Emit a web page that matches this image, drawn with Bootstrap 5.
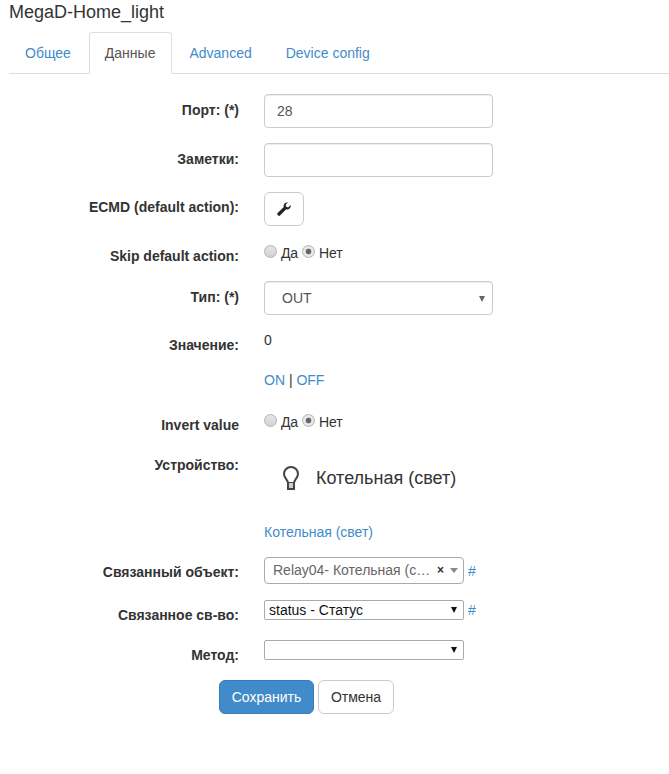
<!DOCTYPE html>
<html lang="en">

<head>
    <meta charset="UTF-8">
    <meta name="viewport" content="width=device-width, initial-scale=1">
    <title>MegaD-Home_light</title>
    <link rel="stylesheet" href="https://cdn.jsdelivr.net/npm/bootstrap@5.3.2/dist/css/bootstrap.min.css">
    <script src="https://cdn.jsdelivr.net/npm/bootstrap@5.3.2/dist/js/bootstrap.bundle.min.js"></script>
    <style>
        body {
            font-family: "Liberation Sans", Arial, sans-serif;
            font-size: 14px;
            line-height: 20px;
            color: #333;
            padding: 0 0 0 9px;
        }

        a {
            color: #428bca;
            text-decoration: none;
        }

        .page-title {
            font-size: 18px;
            line-height: 20px;
            font-weight: 400;
            margin: 2px 0 10px;
        }

        .nav-tabs {
            border-bottom-color: #ddd;
            margin-bottom: 20px;
        }

        .nav-tabs .nav-link {
            color: #428bca;
            padding: 10px 15px;
            margin-right: 2px;
            height: 42px;
            border-radius: 4px 4px 0 0;
        }

        .nav-tabs .nav-link.active {
            color: #555;
            border-color: #ddd #ddd #fff;
            padding-right: 16px;
            margin-right: 1px;
        }

        .fld {
            margin-bottom: 15px;
            gap: 25px;
        }

        .fld-gap16 {
            margin-bottom: 16px;
        }

        .fld-gap20 {
            margin-bottom: 20px;
        }

        .fld-label {
            width: 230px;
            flex: none;
            text-align: right;
            font-weight: 700;
            padding-top: 5px;
            margin: 0;
        }

        .fld-label-low {
            padding-top: 6px;
        }

        .fld-body {
            width: 229px;
            flex: none;
        }

        .fld-input,
        .fld-select {
            height: 34px;
            border: 1px solid #ccc;
            border-radius: 4px;
            color: #555;
            font-size: 14px;
            line-height: 20px;
            padding: 6px 12px;
            box-shadow: inset 0 1px 1px rgba(0, 0, 0, .075);
        }

        .fld-select {
            padding-left: 17px;
            position: relative;
        }

        .select-arrow {
            position: absolute;
            right: 7px;
            top: 14px;
            border-left: 3px solid transparent;
            border-right: 3px solid transparent;
            border-top: 6px solid #666;
        }

        .wrench-btn {
            width: 40px;
            height: 34px;
            padding: 0;
            border-color: #ccc;
            display: flex;
            align-items: center;
            justify-content: center;
        }

        .radio-line {
            line-height: 20px;
            height: 20px;
            padding-top: 2px;
        }

        .old-radio {
            appearance: none;
            width: 13px;
            height: 13px;
            border-radius: 50%;
            border: 1px solid #b4b4b4;
            background: linear-gradient(#e6e6e6, #d2d2d2);
            margin: 0;
            vertical-align: 0;
        }

        .old-radio:checked {
            background: radial-gradient(circle, #666 0 2.500px, #e8e8e8 3.200px);
        }

        .native-sel {
            appearance: none;
            width: 200px;
            height: 20px;
            font-size: 14px;
            line-height: 18px;
            font-family: "Liberation Sans", Arial, sans-serif;
            color: #111;
            border: 1px solid #aaa;
            border-radius: 2px;
            padding: 0 0 0 4px;
            display: block;
            flex: none;
            background: #fff url("data:image/svg+xml,%3Csvg xmlns='http://www.w3.org/2000/svg' width='6' height='6'%3E%3Cpath d='M0 0h6L3 6z' fill='%23111'/%3E%3C/svg%3E") no-repeat right 6px center;
        }

        .chosen-box {
            width: 200px;
            height: 27px;
            border: 1px solid #aaa;
            border-radius: 4px;
            padding: 0 5px 0 8px;
            color: #666;
            line-height: 25px;
            white-space: nowrap;
        }

        .chosen-text {
            flex: 1;
        }

        .chosen-x {
            color: #333;
            font-weight: 700;
            font-size: 12px;
            margin: 0 6px 0 0;
        }

        .chosen-caret {
            border-left: 4px solid transparent;
            border-right: 4px solid transparent;
            border-top: 5px solid #888;
        }

        .device-line {
            height: 56px;
            margin-left: 19px;
            font-size: 18px;
            color: #333;
            gap: 17px;
        }

        .form-btns {
            margin-left: 210px;
        }

        .save-btn,
        .cancel-btn {
            font-size: 14px;
            padding: 6px 0;
            height: 34px;
            line-height: 20px;
        }

        .save-btn {
            background: #428bca;
            border-color: #357ebd;
            color: #fff;
            width: 95px;
        }

        .cancel-btn {
            background: #fff;
            border-color: #ccc;
            color: #333;
            width: 76px;
        }
    </style>
</head>

<body>
    <h1 class="page-title">MegaD-Home_light</h1>

    <ul class="nav nav-tabs">
        <li class="nav-item"><a class="nav-link" href="#">Общее</a></li>
        <li class="nav-item"><a class="nav-link active" href="#">Данные</a></li>
        <li class="nav-item"><a class="nav-link" href="#">Advanced</a></li>
        <li class="nav-item"><a class="nav-link" href="#">Device config</a></li>
    </ul>

    <form onsubmit="return false;">
        <div class="d-flex fld">
            <label class="fld-label fld-label-low">Порт: (*)</label>
            <div class="fld-body"><input type="text" class="form-control fld-input" value="28"></div>
        </div>
        <div class="d-flex fld">
            <label class="fld-label fld-label-low">Заметки:</label>
            <div class="fld-body"><input type="text" class="form-control fld-input"></div>
        </div>
        <div class="d-flex fld">
            <label class="fld-label">ECMD (default action):</label>
            <div class="fld-body">
                <button type="button" class="btn btn-light bg-white wrench-btn">
                    <svg width="14" height="14" viewBox="0 0 14 14"><path fill="#222" d="M13.600 3c.3 1.400-.1 2.600-1 3.500-.9.9-2.200 1.200-3.400.8L3 13.500c-.5.500-1.200.5-1.700.1l-.8-.8c-.5-.5-.4-1.200.1-1.700l6.200-6.200c-.4-1.200-.1-2.500.8-3.400C8.500.6 9.700.2 11 .5L8.600 2.800l.5 2 2 .6z"/></svg>
                </button>
            </div>
        </div>
        <div class="d-flex fld">
            <label class="fld-label">Skip default action:</label>
            <div class="fld-body radio-line">
                <input type="radio" class="old-radio" name="skip"> Да
                <input type="radio" class="old-radio" name="skip" checked> Нет
            </div>
        </div>
        <div class="d-flex fld">
            <label class="fld-label fld-label-low">Тип: (*)</label>
            <div class="fld-body">
                <div class="fld-select form-control">OUT<span class="select-arrow"></span></div>
            </div>
        </div>
        <div class="d-flex fld">
            <label class="fld-label">Значение:</label>
            <div class="fld-body">0</div>
        </div>
        <div class="d-flex fld fld-gap20">
            <div class="fld-label p-0"></div>
            <div class="fld-body"><a href="#">ON</a> | <a href="#">OFF</a></div>
        </div>
        <div class="d-flex fld">
            <label class="fld-label">Invert value</label>
            <div class="fld-body radio-line">
                <input type="radio" class="old-radio" name="inv"> Да
                <input type="radio" class="old-radio" name="inv" checked> Нет
            </div>
        </div>
        <div class="d-flex fld">
            <label class="fld-label">Устройство:</label>
            <div class="fld-body">
                <div class="d-flex align-items-center device-line">
                    <svg width="16" height="24" viewBox="0 0 16 24" fill="none" stroke="#444" stroke-width="2"><path d="M5 17c0-3-4-5-4-9a7 7 0 0 1 14 0c0 4-4 6-4 9z"/><path d="M5 17v6h6v-6" fill="#ccc"/></svg>
                    <span class="text-nowrap">Котельная (свет)</span>
                </div>
                <div class="mt-3"><a href="#">Котельная (свет)</a></div>
            </div>
        </div>
        <div class="d-flex fld fld-gap16">
            <label class="fld-label">Связанный объект:</label>
            <div class="fld-body d-flex align-items-center gap-1">
                <div class="chosen-box d-flex align-items-center flex-shrink-0">
                    <span class="chosen-text">Relay04- Котельная (с…</span>
                    <span class="chosen-x">×</span>
                    <span class="chosen-caret"></span>
                </div>
                <a href="#">#</a>
            </div>
        </div>
        <div class="d-flex fld">
            <label class="fld-label">Связанное св-во:</label>
            <div class="fld-body d-flex gap-1">
                <select class="native-sel"><option>status - Статус</option></select>
                <a href="#">#</a>
            </div>
        </div>
        <div class="d-flex fld">
            <label class="fld-label">Метод:</label>
            <div class="fld-body"><select class="native-sel"><option></option></select></div>
        </div>
        <div class="d-flex gap-1 form-btns">
            <button type="submit" class="btn save-btn">Сохранить</button>
            <button type="button" class="btn cancel-btn">Отмена</button>
        </div>
    </form>
</body>

</html>
